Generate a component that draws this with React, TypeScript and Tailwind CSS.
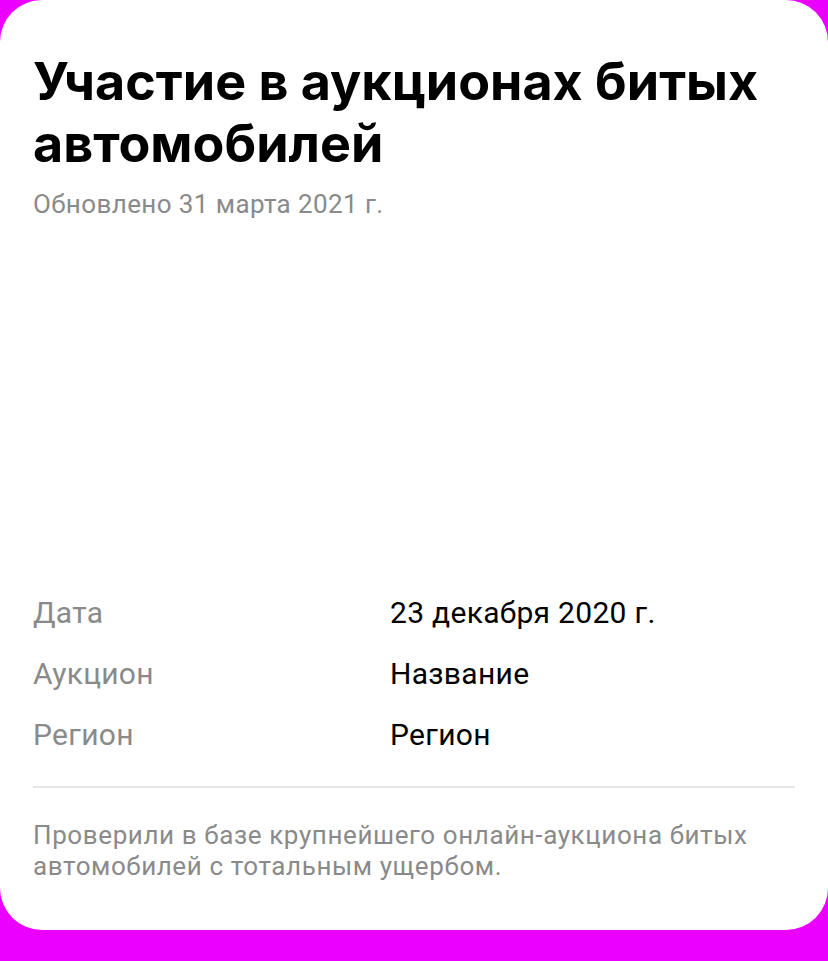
const rows = [
  { label: 'Дата', value: '23 декабря 2020 г.' },
  { label: 'Аукцион', value: 'Название' },
  { label: 'Регион', value: 'Регион' },
];

export default function App() {
  return (
    <div className="min-h-screen bg-[#eb00ff] font-['Roboto',sans-serif]">
      <div className="bg-white rounded-[42px] px-[33px] pt-[51px] pb-[48px]">
        {/* Header */}
        <h1 className="font-['Inter',sans-serif] text-[52px] leading-[62px] font-bold text-black">
          Участие в аукционах битых автомобилей
        </h1>
        <p className="mt-[13px] text-[26px] leading-[32px] tracking-[0.4px] text-[#8a8a8a]">
          Обновлено 31 марта 2021 г.
        </p>

        {/* empty media area */}
        <div className="h-[362px]" />

        {/* Details */}
        <div>
          {rows.map((row) => (
            <div key={row.label} className="flex text-[30px] leading-[61px] tracking-[0.3px]">
              <span className="w-[357px] shrink-0 text-[#8a8a8a]">{row.label}</span>
              <span className="text-black">{row.value}</span>
            </div>
          ))}
        </div>

        <div className="mt-[21px] h-[2px] bg-[#e6e6e6]" />

        <p className="mt-[32px] text-[26px] leading-[31px] tracking-[0.6px] text-[#8a8a8a]">
          Проверили в базе крупнейшего онлайн-аукциона битых автомобилей с тотальным ущербом.
        </p>
      </div>
    </div>
  );
}
